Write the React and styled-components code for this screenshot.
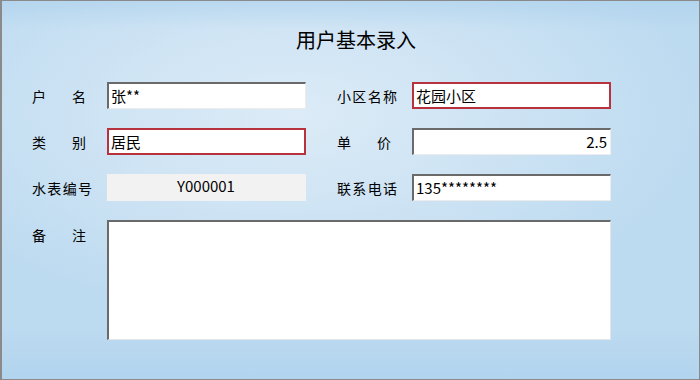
import styled, { createGlobalStyle, css } from "styled-components";

const GlobalStyle = createGlobalStyle`
  html, body {
    margin: 0;
    padding: 0;
  }
  body {
    font-family: "Noto Sans CJK SC", "Noto Sans", sans-serif;
  }
`;

const Window = styled.div`
  box-sizing: border-box;
  width: 700px;
  height: 380px;
  border: 1px solid #8a8a8a;
  border-left-width: 2px;
  background:
    linear-gradient(180deg, rgba(170, 208, 236, 0.55) 0px, rgba(170, 208, 236, 0) 28px),
    linear-gradient(0deg, rgba(168, 206, 236, 0.5) 0px, rgba(168, 206, 236, 0) 50px),
    radial-gradient(ellipse 60% 55% at 42% 30%, #dcebf7 0%, #cfe4f4 45%, #bcdaf0 100%);
  padding: 24px 0 0 30px;
`;

const Title = styled.h1`
  margin: 0 0 27px 0;
  padding-left: 264px;
  font-size: 20px;
  font-weight: normal;
  line-height: 30px;
  color: #000;
  white-space: nowrap;
`;

const Form = styled.div`
  display: grid;
  grid-template-columns: 274px 274px;
  column-gap: 31px;
  row-gap: 19px;
`;

const Field = styled.div`
  display: flex;
  align-items: ${(p) => (p.$top ? "flex-start" : "center")};
  gap: 15px;
  grid-column: ${(p) => (p.$wide ? "1 / span 2" : "auto")};
`;

const Label = styled.span`
  box-sizing: border-box;
  width: 60px;
  flex: none;
  font-size: 14px;
  line-height: 20px;
  color: #000;
  text-align: justify;
  text-align-last: justify;
  padding-right: ${(p) => (p.$short ? "6px" : "0")};
  margin-top: ${(p) => (p.$top ? "5px" : "0")};
`;

const boxBase = css`
  box-sizing: border-box;
  width: 199px;
  height: 27px;
  background: #fff;
  font-size: 15px;
  line-height: 23px;
  color: #000;
  padding: 0 3px 0 2px;
  white-space: nowrap;
  overflow: hidden;
`;

const Input = styled.div`
  ${boxBase}
  text-align: ${(p) => (p.$right ? "right" : "left")};
  border-style: solid;
  border-color: ${(p) =>
    p.$error ? "#b8323e" : "#6a6a6a #ececec #ececec #6a6a6a"};
  border-width: ${(p) => (p.$error ? "2px" : "2px 1px 1px 2px")};
`;

const ReadOnly = styled.div`
  ${boxBase}
  background: #f2f2f2;
  text-align: center;
  line-height: 24px;
`;

const TextArea = styled.div`
  box-sizing: border-box;
  width: 504px;
  height: 120px;
  background: #fff;
  border-style: solid;
  border-color: #6a6a6a #e6e6e6 #e6e6e6 #6a6a6a;
  border-width: 2px 1px 1px 2px;
`;

export default function App() {
  return (
    <>
      <GlobalStyle />
      <Window>
        <Title>用户基本录入</Title>
        <Form>
          <Field>
            <Label $short>户名</Label>
            <Input>张**</Input>
          </Field>
          <Field>
            <Label>小区名称</Label>
            <Input $error>花园小区</Input>
          </Field>
          <Field>
            <Label $short>类别</Label>
            <Input $error>居民</Input>
          </Field>
          <Field>
            <Label $short>单价</Label>
            <Input $right>2.5</Input>
          </Field>
          <Field>
            <Label>水表编号</Label>
            <ReadOnly>Y000001</ReadOnly>
          </Field>
          <Field>
            <Label>联系电话</Label>
            <Input>135********</Input>
          </Field>
          <Field $wide $top>
            <Label $top $short>备注</Label>
            <TextArea />
          </Field>
        </Form>
      </Window>
    </>
  );
}
